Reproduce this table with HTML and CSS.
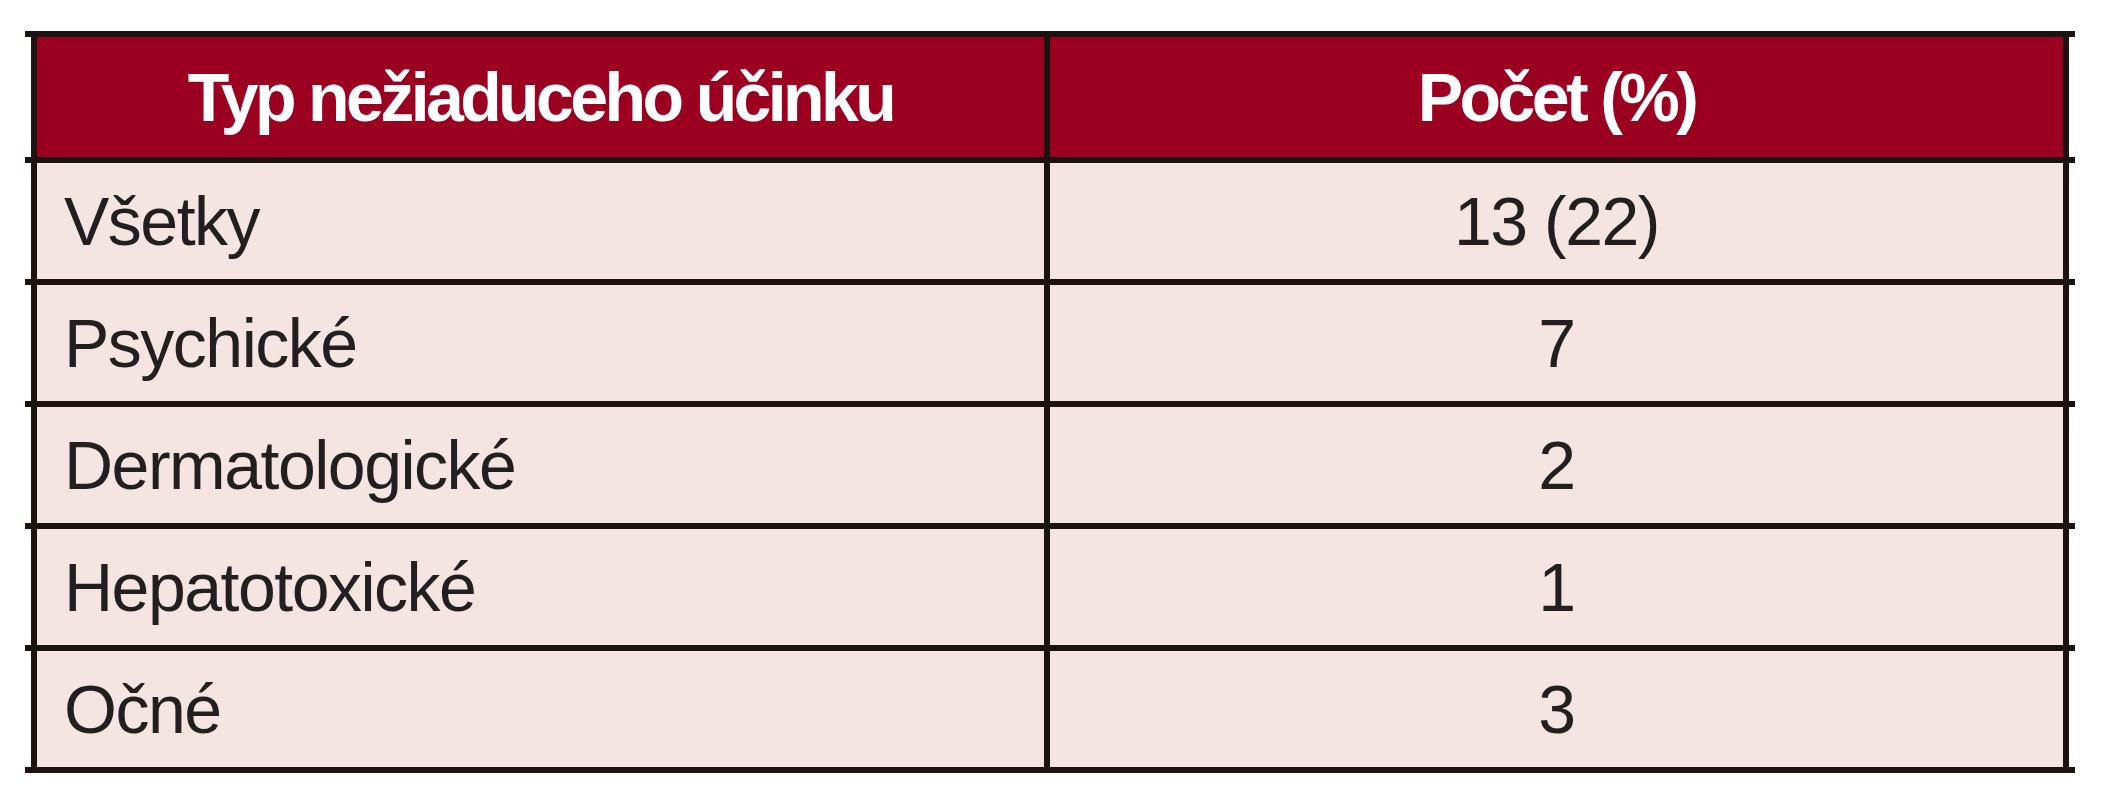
FILE: index.html
```html
<!DOCTYPE html>
<html lang="sk">
<head>
<meta charset="utf-8">
<title>Nežiaduce účinky</title>
<link rel="stylesheet" href="styles.css">
</head>
<body>
<div class="table">
  <div class="row head">
    <div class="cells">
      <div class="cell c1">Typ nežiaduceho účinku</div>
      <div class="cell c2">Počet (%)</div>
    </div>
  </div>
  <div class="row">
    <div class="cells">
      <div class="cell c1">Všetky</div>
      <div class="cell c2">13 (22)</div>
    </div>
  </div>
  <div class="row">
    <div class="cells">
      <div class="cell c1">Psychické</div>
      <div class="cell c2">7</div>
    </div>
  </div>
  <div class="row">
    <div class="cells">
      <div class="cell c1">Dermatologické</div>
      <div class="cell c2">2</div>
    </div>
  </div>
  <div class="row">
    <div class="cells">
      <div class="cell c1">Hepatotoxické</div>
      <div class="cell c2">1</div>
    </div>
  </div>
  <div class="row">
    <div class="cells">
      <div class="cell c1">Očné</div>
      <div class="cell c2">3</div>
    </div>
  </div>
</div>
</body>
</html>
```

FILE: styles.css
```css
html, body {
  margin: 0;
  padding: 0;
  background: #ffffff;
}

body {
  font-family: "Liberation Sans", Arial, sans-serif;
  color: #231f20;
}

.table {
  margin: 31px 0 0 25px;
  width: 2050px;
}

.row {
  border-top: 6px solid #1c1311;
}

.row:last-child {
  border-bottom: 6px solid #1c1311;
}

.cells {
  margin: 0 6px;
  border-left: 6px solid #1c1311;
  border-right: 6px solid #1c1311;
  display: grid;
  grid-template-columns: 1013px 1fr;
  background: #f5e5e2;
}

.cell {
  display: flex;
  align-items: center;
  height: 116px;
  font-size: 68px;
  letter-spacing: -1.5px;
  line-height: 1;
}

.c1 {
  border-right: 6px solid #1c1311;
  padding-left: 27px;
}

.c2 {
  justify-content: center;
}

.head .cells {
  background: #9b0021;
}

.head .cell {
  height: 120px;
  color: #ffffff;
  font-weight: bold;
  letter-spacing: -3.6px;
  justify-content: center;
  padding-left: 0;
}
```
